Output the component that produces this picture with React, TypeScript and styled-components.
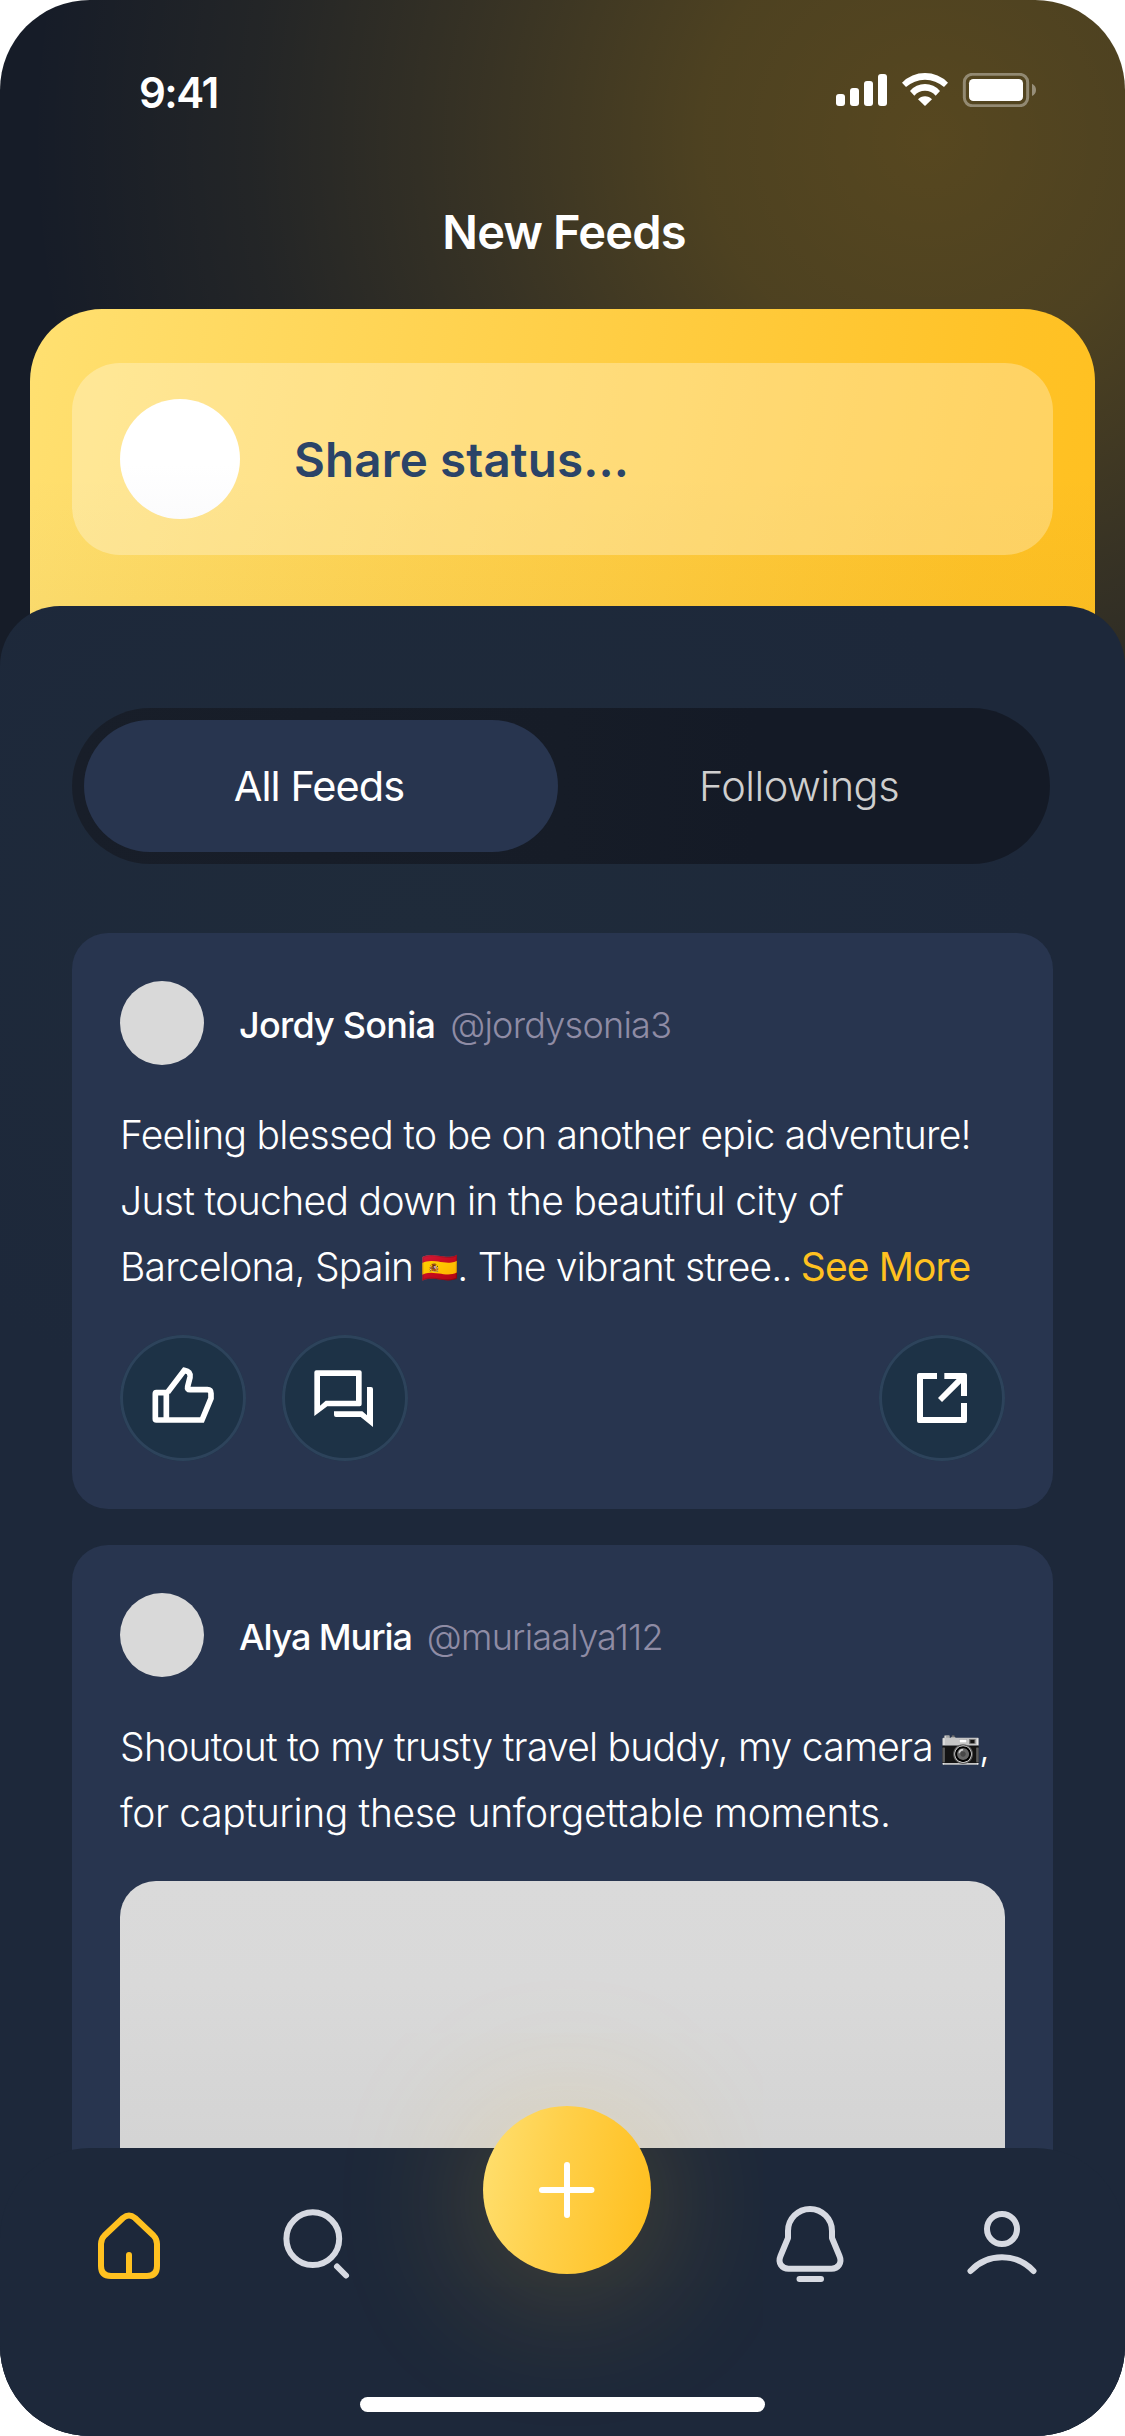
import React from "react";
import styled, { createGlobalStyle } from "styled-components";

const GlobalStyle = createGlobalStyle`
  *, *::before, *::after { box-sizing: border-box; }
  body {
    margin: 0;
    background: #ffffff;
    font-family: Inter, "Liberation Sans", sans-serif;
    -webkit-font-smoothing: antialiased;
  }
  button { border: 0; padding: 0; background: none; font: inherit; color: inherit; }
`;

const Screen = styled.main`
  position: relative;
  display: flex;
  flex-direction: column;
  width: 1125px;
  height: 2436px;
  overflow: hidden;
  border-radius: 90px;
  background:
    radial-gradient(circle 900px at 930px 140px, rgba(255, 183, 10, 0.28) 0%, rgba(255, 185, 10, 0.24) 25%, rgba(255, 185, 15, 0.145) 50%, rgba(255, 190, 20, 0.06) 75%, rgba(255, 190, 20, 0) 100%),
    #161c28;
`;

const StatusBar = styled.div`
  display: flex;
  align-items: center;
  justify-content: space-between;
  height: 186px;
  padding: 0 89px 0 139px;
  color: #ffffff;
`;

const Clock = styled.span`
  font-size: 42px;
  font-weight: 600;
  letter-spacing: -1.5px;
  line-height: 50px;
`;

const StatusIcons = styled.svg`
  width: 200px;
  height: 34px;
  margin-bottom: 6px;
`;

const Title = styled.h1`
  margin: 0 0 32px;
  padding-left: 3px;
  font-size: 47px;
  font-weight: 600;
  letter-spacing: -0.85px;
  line-height: 91px;
  text-align: center;
  color: #ffffff;
`;

const ShareCard = styled.section`
  flex: none;
  height: 360px;
  margin: 0 30px -63px;
  padding: 54px 42px 0;
  border-radius: 72px 72px 0 0;
  background:
    linear-gradient(180deg, rgba(30, 40, 60, 0) 45%, rgba(30, 40, 60, 0.025) 83%),
    linear-gradient(100deg, #ffe071 0%, #ffd04a 45%, #ffc226 88%, #ffc020 100%);
`;

const ShareField = styled.div`
  display: flex;
  align-items: center;
  gap: 54px;
  height: 192px;
  padding: 0 48px;
  border-radius: 48px;
  background: rgba(255, 255, 255, 0.29);
`;

const Avatar = styled.div<{ $size: number; $tone: string }>`
  flex: none;
  width: ${(p) => p.$size}px;
  height: ${(p) => p.$size}px;
  border-radius: 50%;
  background: ${(p) => p.$tone};
`;

const SharePrompt = styled.span`
  padding-top: 1px;
  font-size: 47.5px;
  font-weight: 600;
  letter-spacing: 0.15px;
  color: #2b4468;
`;

const Panel = styled.section`
  position: relative;
  flex: 1;
  min-height: 0;
  overflow: hidden;
  padding: 102px 72px 0;
  border-radius: 60px 60px 0 0;
  background:
    radial-gradient(ellipse 620px 520px at 420px 330px, #1f2b3a 0%, rgba(31, 43, 58, 0) 100%),
    #1d283a;
`;

const Tabs = styled.div`
  display: flex;
  gap: 6px;
  width: 978px;
  height: 156px;
  margin-bottom: 69px;
  padding: 12px;
  border-radius: 78px;
  background: linear-gradient(90deg, #181e29 0%, #161c27 50%, #141a26 70%);
`;

const Tab = styled.button<{ $active?: boolean; $tracking: number }>`
  width: 474px;
  height: 132px;
  padding-right: 4px;
  border-radius: 66px;
  background: ${(p) => (p.$active ? "#28354f" : "transparent")};
  color: ${(p) => (p.$active ? "#ffffff" : "#cfcfcf")};
  font-size: 41.5px;
  font-weight: ${(p) => (p.$active ? 400 : 320)};
  letter-spacing: ${(p) => p.$tracking}px;
`;

const Feed = styled.div`
  display: flex;
  flex-direction: column;
  gap: 36px;
`;

const Card = styled.article`
  padding: 48px;
  border-radius: 36px;
  background: #28354f;
`;

const Author = styled.header`
  display: flex;
  align-items: center;
  margin-bottom: 37px;
`;

const Name = styled.span<{ $tracking: number }>`
  margin-left: 35px;
  padding-top: 4px;
  font-size: 36px;
  font-weight: 500;
  letter-spacing: ${(p) => p.$tracking}px;
  color: #ffffff;
`;

const Handle = styled.span`
  margin-left: 15px;
  padding-top: 4px;
  font-size: 36px;
  font-weight: 300;
  letter-spacing: -0.75px;
  color: #8f8ca5;
`;

const Body = styled.p`
  margin: 0 0 35px;
  font-size: 39px;
  font-weight: 330;
  line-height: 66px;
  color: #ffffff;
  white-space: nowrap;
`;

const Line = styled.span<{ $tracking: number }>`
  letter-spacing: ${(p) => p.$tracking}px;
`;

const Emoji = styled.span<{ $size: number; $width: number; $left: number; $gray?: boolean }>`
  display: inline-block;
  width: ${(p) => p.$width}px;
  margin-left: ${(p) => p.$left}px;
  font-size: ${(p) => p.$size}px;
  line-height: 1;
  letter-spacing: 0;
  vertical-align: 3px;
  filter: ${(p) => (p.$gray ? "grayscale(1) contrast(1.15)" : "none")};
`;

const SeeMore = styled.span`
  margin-left: 9px;
  font-weight: 400;
  letter-spacing: -0.9px;
  color: #ffc120;
`;

const Actions = styled.div`
  display: flex;
  gap: 36px;
`;

const RoundButton = styled.button<{ $end?: boolean }>`
  width: 126px;
  height: 126px;
  margin-left: ${(p) => (p.$end ? "auto" : "0")};
  border-radius: 50%;
  background: #1d3246;
  box-shadow: inset 0 0 0 3px #2d435b;

  svg {
    display: block;
    width: 126px;
    height: 126px;
  }
`;

const Photo = styled.div`
  height: 520px;
  border-radius: 36px;
  background: linear-gradient(180deg, #dadada 0%, #d9d9d9 20%, #d4d4d4 50%);
`;

const NavBar = styled.nav`
  position: absolute;
  left: 0;
  right: 0;
  bottom: 0;
  display: flex;
  height: 288px;
  padding: 60px 87px 0 93px;
  border-radius: 90px;
  background: #1d283a;
  color: #d7dae2;
`;

const NavItem = styled.button<{ $active?: boolean; $after?: number }>`
  width: 72px;
  height: 72px;
  margin-right: ${(p) => p.$after ?? 0}px;
  color: ${(p) => (p.$active ? "#ffc120" : "#d7dae2")};

  svg {
    display: block;
    width: 72px;
    height: 72px;
    overflow: visible;
  }
`;

const AddButton = styled.button`
  width: 168px;
  height: 168px;
  margin: -102px 123px 0 0;
  border-radius: 50%;
  background: linear-gradient(100deg, #ffe071 0%, #ffd04a 42%, #ffbe1c 100%);
  box-shadow: 0 12px 150px rgba(255, 193, 32, 0.27);

  svg {
    display: block;
    width: 168px;
    height: 168px;
  }
`;

const HomeIndicator = styled.div`
  position: absolute;
  left: 360px;
  bottom: 24px;
  width: 405px;
  height: 15px;
  border-radius: 8px;
  background: #ffffff;
`;

const stroke = {
  fill: "none",
  stroke: "currentColor",
  strokeWidth: 6,
  strokeLinecap: "round" as const,
  strokeLinejoin: "round" as const,
};

const ThumbIcon = () => (
  <svg viewBox="60 75 378 378">
    <path
      d="M203 247 L253 181 Q273 184 270 202 L263 230 Q261 239 270 239 H322 Q333 239 333 250 V265 L306 330 H169 Q166 330 166 327 V251 Q166 248 169 248 H201 M199 244 V330"
      fill="none"
      stroke="#ffffff"
      strokeWidth="17"
    />
  </svg>
);

const ChatIcon = () => (
  <svg viewBox="546 75 378 378" fill="#ffffff">
    <path
      fillRule="evenodd"
      d="M649 181 H779 Q785 181 785 187 V283 Q785 289 779 289 H682 L643 318 V187 Q643 181 649 181 Z M660 198 V287 L677 272 H768 V198 Z"
    />
    <path d="M801 231 H813 Q819 231 819 237 V351 L782 321 H708 Q702 321 702 315 V304 H787 L801 316 Z" />
  </svg>
);

const OpenIcon = () => (
  <svg viewBox="57 75 378 378" fill="#ffffff">
    <path d="M231 189 H177 Q171 189 171 195 V333 Q171 339 177 339 H315 Q321 339 321 333 V279 H303 V321 H189 V207 H231 Z" />
    <path d="M253 189 H315 Q321 189 321 195 V258 H303 V220 L246 276 L234 264 L290 207 H253 Z" />
  </svg>
);

export default function App() {
  return (
    <>
      <GlobalStyle />
      <Screen>
        <StatusBar>
          <Clock>9:41</Clock>
          <StatusIcons viewBox="108 69 600 102" fill="#ffffff">
            <rect x="108" y="132" width="27" height="36" rx="9" />
            <rect x="150" y="114" width="27" height="54" rx="9" />
            <rect x="192" y="93" width="27" height="75" rx="9" />
            <rect x="234" y="72" width="27" height="96" rx="9" />
            <path d="M306 98 A97 97 0 0 1 444 98 L432 111 A86 86 0 0 0 318 111 Z" />
            <path d="M330 123 A59 59 0 0 1 420 123 L407 137 A42 42 0 0 0 343 137 Z" />
            <path d="M354 148 A28 28 0 0 1 396 148 L375 168 Z" />
            <rect x="493" y="73" width="190" height="94" rx="24" fill="none" stroke="#ffffff" strokeWidth="9" opacity="0.37" />
            <rect x="507" y="87" width="162" height="66" rx="13" />
            <path d="M696 101 Q708 107 708 119 Q708 132 696 138 Z" opacity="0.4" />
          </StatusIcons>
        </StatusBar>
        <Title>New Feeds</Title>

        <ShareCard>
          <ShareField>
            <Avatar $size={120} $tone="linear-gradient(180deg, #ffffff 55%, #fbfbfc 100%)" />
            <SharePrompt>Share status...</SharePrompt>
          </ShareField>
        </ShareCard>

        <Panel>
          <Tabs>
            <Tab $active $tracking={-0.94}>All Feeds</Tab>
            <Tab $tracking={-0.48}>Followings</Tab>
          </Tabs>

          <Feed>
            <Card>
              <Author>
                <Avatar $size={84} $tone="#d9d9d9" />
                <Name $tracking={-0.77}>Jordy Sonia</Name>
                <Handle>@jordysonia3</Handle>
              </Author>
              <Body>
                <Line $tracking={-0.71}>Feeling blessed to be on another epic adventure!</Line>
                <br />
                <Line $tracking={-0.65}>Just touched down in the beautiful city of</Line>
                <br />
                <Line $tracking={-0.74}>Barcelona, Spain</Line>
                <Emoji $size={30} $width={36} $left={8}>🇪🇸</Emoji>
                <Line $tracking={-0.78}>. The vibrant stree..</Line>
                <SeeMore>See More</SeeMore>
              </Body>
              <Actions>
                <RoundButton aria-label="Like"><ThumbIcon /></RoundButton>
                <RoundButton aria-label="Comment"><ChatIcon /></RoundButton>
                <RoundButton $end aria-label="Open"><OpenIcon /></RoundButton>
              </Actions>
            </Card>

            <Card>
              <Author>
                <Avatar $size={84} $tone="#d9d9d9" />
                <Name $tracking={-1.1}>Alya Muria</Name>
                <Handle>@muriaalya112</Handle>
              </Author>
              <Body>
                <Line $tracking={-0.74}>Shoutout to my trusty travel buddy, my camera</Line>
                <Emoji $size={33} $width={39} $left={7} $gray>📷</Emoji>
                <Line $tracking={0}>,</Line>
                <br />
                <Line $tracking={-0.33}>for capturing these unforgettable moments.</Line>
              </Body>
              <Photo />
            </Card>
          </Feed>
        </Panel>

        <NavBar>
          <NavItem $active $after={114} aria-label="Home">
            <svg viewBox="93 2208 72 72" {...stroke}>
              <path d="M101 2244 Q101 2239 104.500 2235.500 L123 2218 Q129 2213 135 2218 L153.500 2235.500 Q157 2239 157 2244 V2266 Q157 2276 147 2276 H111 Q101 2276 101 2266 Z M129 2255 V2275" />
            </svg>
          </NavItem>
          <NavItem $after={132} aria-label="Search">
            <svg viewBox="279 2208 72 72" {...stroke}>
              <circle cx="312.800" cy="2238.700" r="26.400" />
              <path d="M337 2266.500 L346 2275.500" />
            </svg>
          </NavItem>
          <AddButton aria-label="New post">
            <svg viewBox="0 0 168 168" {...stroke} stroke="#ffffff">
              <path d="M59 84 H108.500 M84 59 V109" />
            </svg>
          </AddButton>
          <NavItem $after={120} aria-label="Notifications">
            <svg viewBox="774 2208 72 72" {...stroke}>
              <path d="M788 2238 V2231 A22 22 0 0 1 832 2231 V2238 L839.500 2256 C842.500 2263 838 2268.700 831.500 2268.700 H788.500 C782 2268.700 777.500 2263 780.500 2256 Z M799.500 2279 H821" />
            </svg>
          </NavItem>
          <NavItem aria-label="Profile">
            <svg viewBox="966 2208 72 72" {...stroke}>
              <circle cx="1002" cy="2229" r="15" />
              <path d="M970.500 2271 A43 43 0 0 1 1033.500 2271" />
            </svg>
          </NavItem>
        </NavBar>
        <HomeIndicator />
      </Screen>
    </>
  );
}
